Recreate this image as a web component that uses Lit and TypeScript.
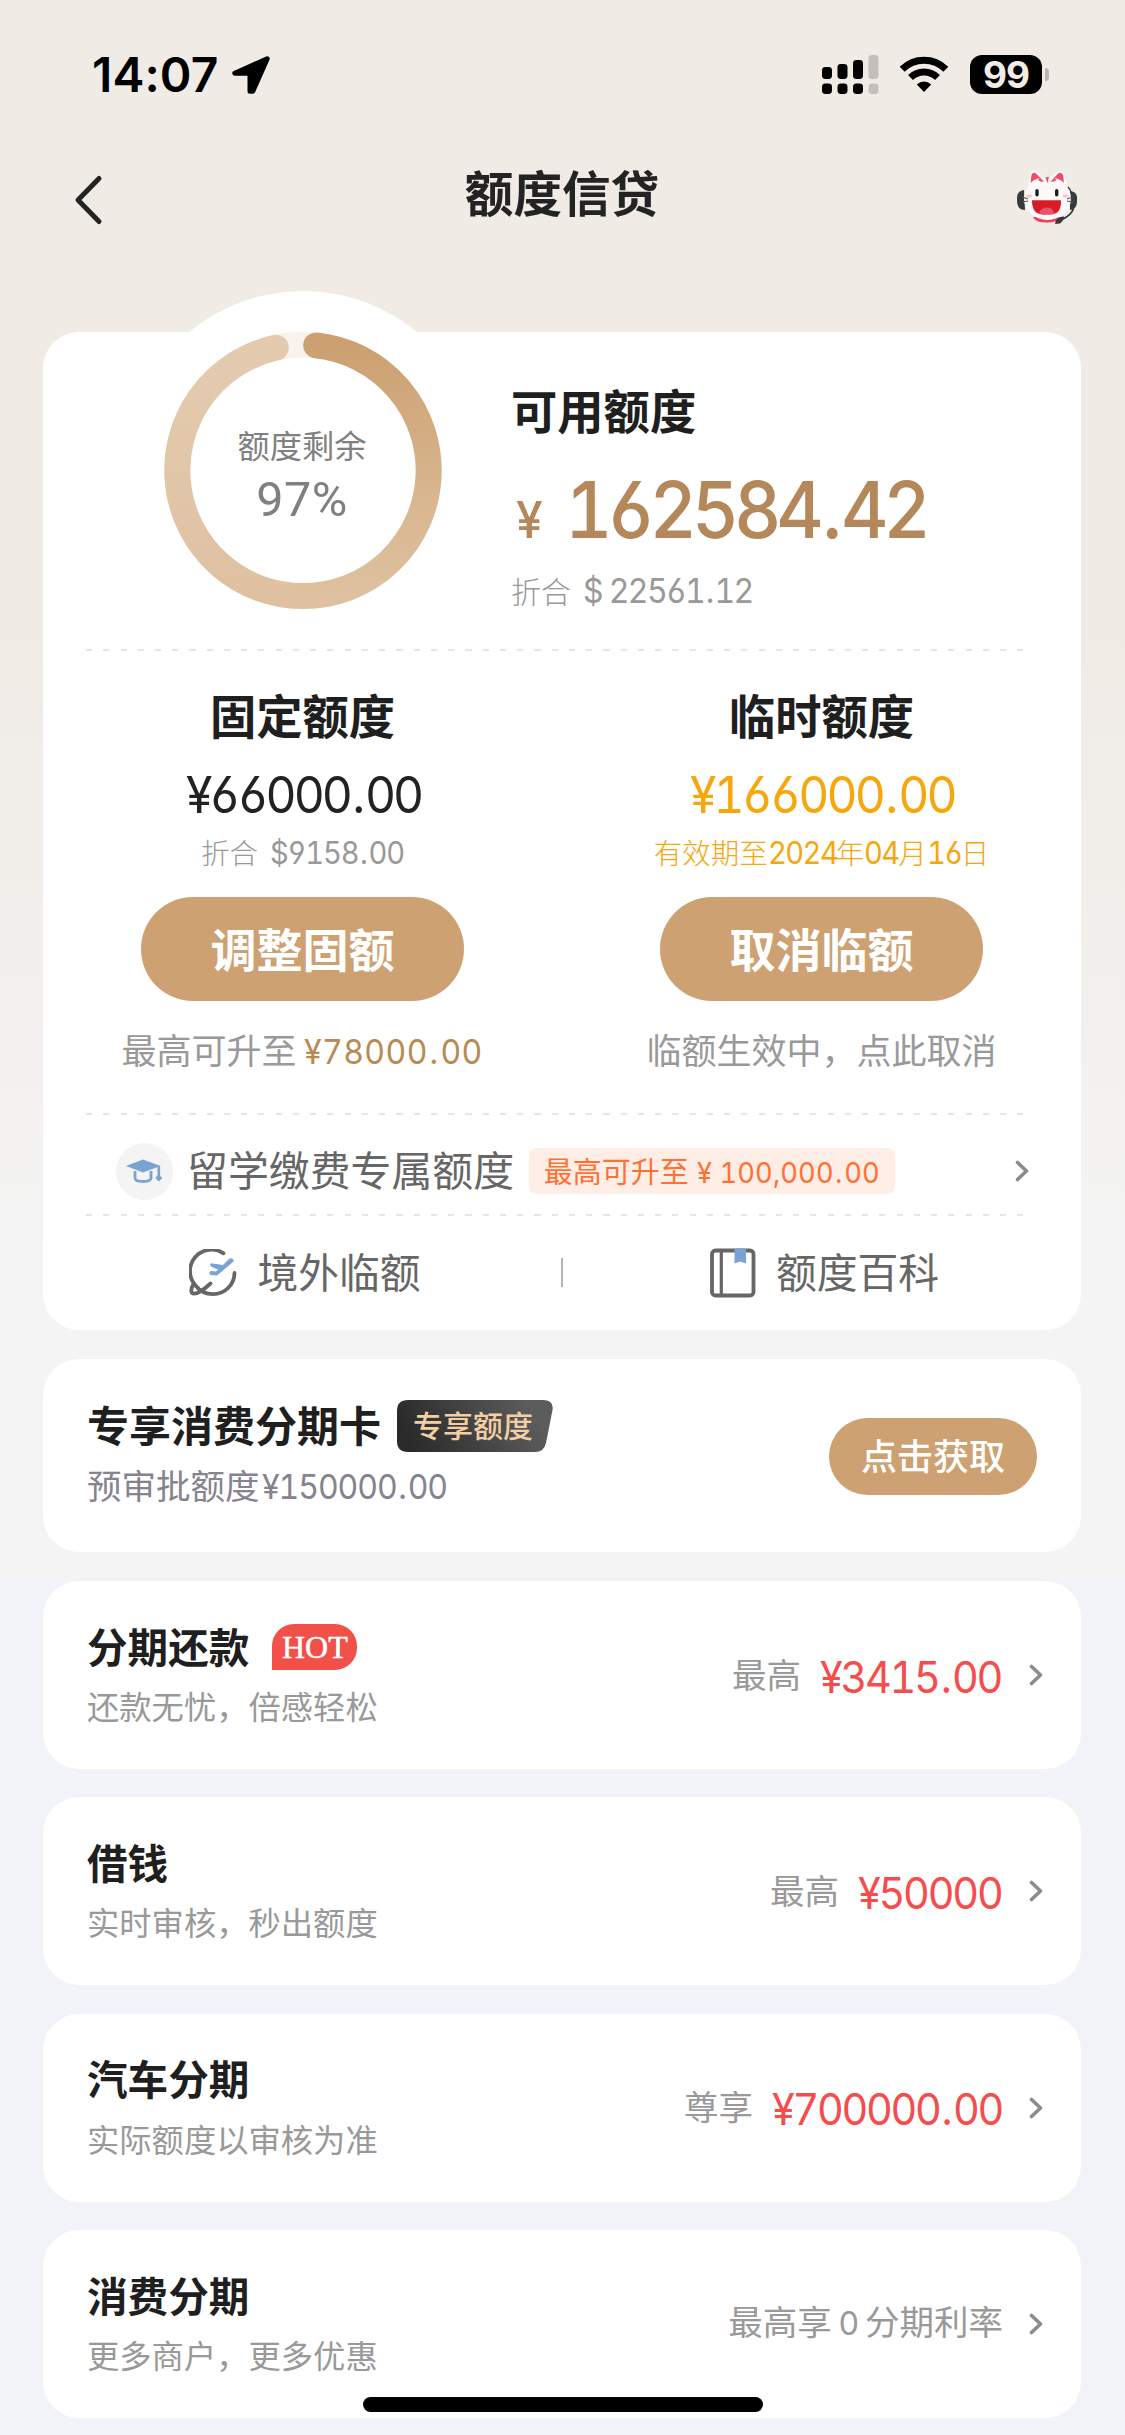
import { LitElement, html, css, svg, nothing } from "lit";
import { customElement, property } from "lit/decorators.js";

interface Product {
  title: string;
  sub: string;
  label: string;
  amount?: string;
  width?: number;
  hot?: boolean;
}

const PRODUCTS: Product[] = [
  { title: "分期还款", sub: "还款无忧，倍感轻松", label: "最高", amount: "¥3415.00", width: 183, hot: true },
  { title: "借钱", sub: "实时审核，秒出额度", label: "最高", amount: "¥50000", width: 145 },
  { title: "汽车分期", sub: "实际额度以审核为准", label: "尊享", amount: "¥700000.00", width: 231 },
  { title: "消费分期", sub: "更多商户，更多优惠", label: "最高享0分期利率" },
];

const chevron = html`<svg width="15" height="22" viewBox="0 0 15 22" fill="none">
  <path d="M2.5 2.5 L11.5 11 L2.5 19.5" stroke="#8c8c8c" stroke-width="3.6" stroke-linecap="round" stroke-linejoin="round" />
</svg>`;

/** A figure whose tracking is fitted to the given width. */
@customElement("money-figure")
export class MoneyFigure extends LitElement {
  @property() value = "";
  @property({ type: Number }) width = 100;
  @property({ type: Number }) size = 40;
  @property({ type: Number }) digit = 0.638;
  static styles = css`
    :host {
      display: inline-block;
      flex: none;
    }
    .run {
      display: inline-block;
      white-space: pre;
      font-family: Inter, sans-serif;
      font-feature-settings: "tnum", "cv03", "cv04";
      transform: scaleX(0.94);
      transform-origin: 0 50%;
    }
    .dot {
      margin: 0 0.06em 0 0.05em;
    }
  `;
  render() {
    const chars = [...this.value];
    const natural = chars.reduce((sum, c) => sum + (c === "." ? 0.4 : /[ ,]/.test(c) ? 0.28 : this.digit), 0) * this.size;
    const spacing = (this.width / 0.94 - natural) / chars.length;
    return html`<style>
        :host {
          width: ${this.width}px;
          height: 1em;
        }
        .run {
          font-size: ${this.size}px;
          letter-spacing: ${spacing.toFixed(2)}px;
        }</style
      ><span class="run">${this.value.split(/(\.)/).map((s) => (s === "." ? html`<span class="dot">.</span>` : s))}</span>`;
  }
}

@customElement("status-bar")
export class StatusBar extends LitElement {
  static styles = css`
    :host {
      display: flex;
      align-items: center;
      justify-content: space-between;
      height: 149px;
      padding: 0 76px 0 92px;
      box-sizing: border-box;
      flex: none;
    }
    .left {
      display: flex;
      align-items: center;
      gap: 13px;
    }
    .time {
      font: 600 48px/60px Inter, sans-serif;
      letter-spacing: 0.1px;
      color: #000;
    }
    .right {
      display: flex;
      align-items: center;
    }
    .signal {
      margin-right: 20px;
    }
    .wifi {
      margin-right: 21px;
    }
    .battery {
      display: flex;
      align-items: center;
      justify-content: center;
      width: 72px;
      height: 39px;
      border-radius: 12px;
      background: #000;
      color: #f1ece6;
      font: 700 37px/39px Inter, sans-serif;
      letter-spacing: -1px;
    }
    .nub {
      width: 4px;
      height: 13px;
      margin-left: 3px;
      border-radius: 0 5px 5px 0;
      background: #b9b5b0;
    }
  `;
  render() {
    return html`
      <div class="left">
        <span class="time">14:07</span>
        <svg width="40" height="40" viewBox="0 0 40 40">
          <path d="M36.2 3.800 L3.800 18.200 H19 V36.300 H21.800 Z" fill="#000" stroke="#000" stroke-width="5" stroke-linejoin="round" />
        </svg>
      </div>
      <div class="right">
        <svg class="signal" width="57" height="39" viewBox="0 0 57 39">
          ${[
            [0, 12, "#000"],
            [15.5, 9, "#000"],
            [31, 5, "#000"],
            [46.5, 0, "#c3c0bb"],
          ].map(
            ([x, y, c]) => svg`
              <rect x=${x} y=${y} width="10" height=${24 - Number(y)} rx="3.4" fill=${c} />
              <rect x=${x} y="28.5" width="10" height="10.5" rx="3.4" fill=${c} />`
          )}
        </svg>
        <svg class="wifi" width="50" height="37" viewBox="0 0 50 37">
          <g fill="none" stroke="#000" stroke-width="7">
            <path d="M3.2 13.2 A31 31 0 0 1 46.8 13.2" />
            <path d="M11.5 21.6 A19.2 19.2 0 0 1 38.5 21.6" />
          </g>
          <path d="M25 36 L17.8 28.6 A10.2 10.2 0 0 1 32.2 28.6 Z" fill="#000" />
        </svg>
        <span class="battery">99</span>
        <i class="nub"></i>
      </div>
    `;
  }
}

@customElement("nav-header")
export class NavHeader extends LitElement {
  static styles = css`
    :host {
      display: grid;
      grid-template-columns: 1fr auto 1fr;
      align-items: center;
      height: 101px;
      padding: 0 47px 0 72px;
      box-sizing: border-box;
      flex: none;
    }
    .title {
      font: 700 48.600px/60px "Noto Sans CJK SC", sans-serif;
      color: #232323;
      padding-bottom: 18px;
      margin-left: -26px;
    }
    .cat {
      justify-self: end;
      margin-bottom: 5px;
    }
  `;
  render() {
    return html`
      <svg width="32" height="52" viewBox="0 0 32 52" fill="none">
        <path d="M27 4.5 L6 26 L27 47.5" stroke="#232323" stroke-width="5" stroke-linecap="round" stroke-linejoin="round" />
      </svg>
      <span class="title">额度信贷</span>
      <svg class="cat" width="61" height="57" viewBox="0 0 61 57">
        <path d="M7 21 C1 22 0 25 0 31 C0 38 3 41 8 41 Z" fill="#3a3a3c" />
        <path d="M53 22 C60 23 60.500 27 60 32 C60 38 57 41 53 41 Z" fill="#3a3a3c" />
        <path d="M16 48 H43 Q41 53.500 30 53.500 Q18 53.500 16 48 Z" fill="#ee4058" />
        <path d="M11 15 L13 4 Q15 0 19 2 L26 8 H34 L41 2 Q45 0 47 4 L50 15 Z" fill="#fffafa" />
        <path d="M13.500 14 L14.500 6 Q16 2.500 19 4.500 L23.500 9 Q17 10 13.500 14 Z" fill="#f04b66" />
        <path d="M47 14 L46 6 Q44 2.500 41 4.500 L37 9 Q43.500 10 47 14 Z" fill="#f04b66" />
        <ellipse cx="30.500" cy="29.500" rx="23.500" ry="21.500" fill="#fffafa" />
        <path d="M28.500 8 H32 L30.300 14.500 Z M23 8.500 L27 12.500 L24 12.800 L21 11 Z M37.500 8.500 L33.500 12.500 L36.500 12.800 L39.500 11 Z" fill="#f0506c" />
        <rect x="18.300" y="20" width="3.400" height="7.500" rx="1.700" fill="#1d1d20" />
        <rect x="38" y="20" width="3.400" height="7.500" rx="1.700" fill="#1d1d20" />
        <ellipse cx="12" cy="27" rx="3.200" ry="1.600" fill="#ffc3cb" />
        <ellipse cx="48.500" cy="27" rx="3.200" ry="1.600" fill="#ffc3cb" />
        <path d="M15 31.300 H44 Q44.500 45.500 33.500 45.500 H26 Q15 45.500 15 31.300 Z" fill="#d91a27" />
        <path d="M22 43.800 Q24.500 38.500 30 38.500 Q35 38.500 37.500 43.800 Q36 45.500 33.500 45.500 H26 Q24 45.500 22 43.800 Z" fill="#e5566b" />
        <path d="M5 28 L11 30 M5 33 L11 32 M56 28 L50 30 M56 33 L50 32" stroke="#55555a" stroke-width="1.100" />
        <path d="M56.500 40 Q54 46 46 50" stroke="#3a3a3c" stroke-width="1.800" fill="none" />
        <path d="M51 18 Q53 20 54 23" stroke="#3a3a3c" stroke-width="1.400" fill="none" />
        <path d="M39 51 Q42 47.500 47 47.500 Q48 50 43 54.500 L38 55 Z" fill="#3a3a3c" />
      </svg>
    `;
  }
}

@customElement("quota-ring")
export class QuotaRing extends LitElement {
  @property({ type: Number }) percent = 97;
  static styles = css`
    :host {
      display: grid;
      place-items: center;
      width: 358px;
      height: 358px;
      flex: none;
    }
    .ring,
    .text {
      grid-area: 1 / 1;
    }
    .text {
      display: flex;
      flex-direction: column;
      align-items: center;
      color: #808080;
      padding: 10px 2px 0 0;
    }
    .label {
      font: 400 32.300px/44px "Noto Sans CJK SC", sans-serif;
    }
    .value {
      font: 400 48.500px/58px Roboto, sans-serif;
      letter-spacing: 0.400px;
      margin-top: 5px;
    }
  `;
  render() {
    const point = (deg: number) => {
      const a = (deg * Math.PI) / 180;
      return `${(179 + 125.7 * Math.sin(a)).toFixed(2)} ${(179.4 - 125.7 * Math.cos(a)).toFixed(2)}`;
    };
    return html`
      <svg class="ring" width="358" height="358" viewBox="0 0 358 358" fill="none">
        <defs>
          <linearGradient id="near" gradientUnits="userSpaceOnUse" x1="190" y1="50" x2="190" y2="310">
            <stop offset="0" stop-color="#cca070" />
            <stop offset="0.6" stop-color="#d8b68f" />
            <stop offset="1" stop-color="#dfc1a1" />
          </linearGradient>
          <linearGradient id="far" gradientUnits="userSpaceOnUse" x1="170" y1="50" x2="170" y2="310">
            <stop offset="0" stop-color="#e4cbb0" />
            <stop offset="1" stop-color="#dfc1a1" />
          </linearGradient>
        </defs>
        <circle cx="179" cy="179" r="179" fill="#fff" />
        <circle cx="179" cy="179.4" r="125.7" stroke="#f9f3ee" stroke-width="26" />
        <path d="M${point(180)} A125.700 125.700 0 0 1 ${point(347.5)}" stroke="url(#far)" stroke-width="26" stroke-linecap="round" />
        <path d="M${point(6)} A125.700 125.700 0 0 1 ${point(180)}" stroke="url(#near)" stroke-width="26" stroke-linecap="round" />
      </svg>
      <div class="text">
        <span class="label">额度剩余</span>
        <span class="value">${this.percent}%</span>
      </div>
    `;
  }
}

@customElement("product-card")
export class ProductCard extends LitElement {
  @property({ attribute: false }) item!: Product;
  static styles = css`
    :host {
      display: flex;
      justify-content: space-between;
      height: 188px;
      margin-bottom: 28.400px;
      padding: 0 37px 0 44px;
      box-sizing: border-box;
      border-radius: 36px;
      background: #fff;
      font-family: "Noto Sans CJK SC", sans-serif;
      flex: none;
    }
    .info {
      padding-top: 39px;
    }
    .head {
      display: flex;
      align-items: center;
      height: 52px;
      gap: 23px;
    }
    .title {
      font-size: 40.600px;
      line-height: 52px;
      font-weight: 700;
      color: #1f1f1f;
      margin-top: -1px;
    }
    .hot {
      width: 85px;
      height: 46px;
      margin-top: 2px;
      border-radius: 22px 22px 22px 0;
      background: #f2514a;
      color: #fff;
      font: 400 32px/46px "Liberation Serif", serif;
      -webkit-text-stroke: 0.500px #fff;
      text-align: center;
    }
    .sub {
      font-size: 32.300px;
      line-height: 44px;
      color: #999;
      margin-top: 11px;
    }
    .value {
      display: flex;
      align-items: center;
      height: 188px;
    }
    .label {
      font-size: 34.500px;
      line-height: 48px;
      color: #999;
      margin-bottom: 5px;
    }
    .digit {
      font-family: Inter, sans-serif;
      font-size: 32px;
      margin: 0 6px 0 7px;
    }
    .amount {
      font-size: 56px;
      line-height: 56px;
      color: #f54d4d;
      margin: 0 0 13px 19px;
    }
    .arrow {
      display: flex;
      margin-left: 26px;
    }
  `;
  render() {
    const { title, sub, label, amount, width, hot } = this.item;
    return html`
      <div class="info">
        <div class="head">
          <span class="title">${title}</span>
          ${hot ? html`<span class="hot">HOT</span>` : nothing}
        </div>
        <div class="sub">${sub}</div>
      </div>
      <div class="value">
        <span class="label">${label.split(/(\d)/).map((s) => (/\d/.test(s) ? html`<span class="digit">${s}</span>` : s))}</span>
        ${amount ? html`<money-figure class="amount" .value=${amount} .width=${width ?? 100} .size=${44}></money-figure>` : nothing}
        <span class="arrow">${chevron}</span>
      </div>
    `;
  }
}

@customElement("app-root")
export class AppRoot extends LitElement {
  static styles = css`
    :host {
      display: block;
    }
    .screen {
      position: relative;
      display: flex;
      flex-direction: column;
      width: 1125px;
      height: 2435px;
      overflow: hidden;
      box-sizing: border-box;
      background: linear-gradient(#f0ebe5 0, #f0ebe5 640px, #f4f4f4 1260px, #f4f4f4 1579px, #f2f3f8 1580px);
      font-family: "Noto Sans CJK SC", sans-serif;
    }
    .content {
      display: flex;
      flex-direction: column;
      padding: 82px 44px 0 43px;
    }
    .card {
      background: #fff;
      border-radius: 36px;
      flex: none;
      box-sizing: border-box;
    }
    .quota {
      height: 998px;
      margin-bottom: 29px;
    }
    .hero {
      display: flex;
      height: 317px;
      padding-left: 81px;
    }
    .ring {
      margin-top: -41px;
    }
    .summary {
      padding: 47px 0 0 29px;
    }
    .heading {
      font-size: 46.300px;
      line-height: 60px;
      font-weight: 700;
      color: #1f1f1f;
    }
    .total {
      display: flex;
      align-items: baseline;
      height: 90px;
      line-height: 90px;
      margin-top: 26px;
      padding-left: 5px;
      color: #b4885a;
      font-weight: 500;
    }
    .total .figure {
      margin-left: 20px;
    }
    .approx {
      display: flex;
      align-items: baseline;
      height: 40px;
      color: #999;
      font-size: 30px;
      font-weight: 300;
      line-height: 40px;
      margin-top: 15px;
    }
    .approx .figure {
      margin-left: 12px;
      font-weight: 400;
    }
    .dash {
      height: 2px;
      margin: 0 53px 0 43px;
      background: repeating-linear-gradient(90deg, #e6e6e6 0 6px, transparent 6px 17.250px);
    }
    .columns {
      display: grid;
      grid-template-columns: 1fr 1fr;
      height: 462px;
    }
    .column {
      display: flex;
      flex-direction: column;
      align-items: center;
      padding-top: 33px;
      white-space: nowrap;
    }
    .limit {
      display: flex;
      align-items: baseline;
      height: 60px;
      line-height: 60px;
      color: #222;
      margin: 21px 0 0 3px;
    }
    .detail {
      display: flex;
      align-items: baseline;
      height: 36px;
      line-height: 36px;
      font-size: 28.500px;
      font-weight: 300;
      color: #999;
      margin-top: 9px;
    }
    .detail money-figure {
      font-weight: 400;
    }
    .detail .gap {
      margin-left: 12px;
    }
    .limit.orange,
    .detail.orange {
      color: #f6a70d;
    }
    .pill {
      display: flex;
      align-items: center;
      justify-content: center;
      width: 323px;
      height: 104px;
      border-radius: 52px;
      background: #cda172;
      color: #fff;
      font-size: 46px;
      line-height: 60px;
      font-weight: 700;
      margin-top: 27px;
      padding-bottom: 4px;
      box-sizing: border-box;
    }
    .note {
      display: flex;
      align-items: baseline;
      height: 46px;
      font-size: 35px;
      line-height: 46px;
      color: #999;
      margin-top: 25px;
    }
    .note .raise {
      color: #b88b54;
      margin-left: 7px;
    }
    .study {
      display: flex;
      align-items: center;
      height: 99px;
      padding: 13px 51px 0 73px;
      box-sizing: border-box;
      font-size: 40.900px;
      line-height: 52px;
      color: #666;
    }
    .badge {
      display: flex;
      align-items: center;
      justify-content: center;
      width: 57px;
      height: 57px;
      border-radius: 50%;
      background: #f4f4f4;
      margin-right: 14px;
    }
    .study .name,
    .links .name {
      padding-bottom: 4px;
    }
    .tag {
      display: flex;
      align-items: baseline;
      justify-content: center;
      width: 366px;
      height: 46px;
      margin-left: 15px;
      border-radius: 8px;
      background: #ffeee6;
      color: #ff7033;
      font-size: 29px;
      line-height: 44px;
    }
    .tag .price {
      margin-left: 8px;
    }
    .study .arrow {
      display: flex;
      margin-left: auto;
    }
    .links {
      display: grid;
      grid-template-columns: 1fr 2px 1fr;
      align-items: center;
      height: 113px;
      padding-left: 4px;
      font-size: 40.800px;
      line-height: 52px;
      color: #666;
    }
    .link {
      display: flex;
      align-items: center;
      justify-content: center;
      gap: 20px;
    }
    .link:last-child {
      padding-left: 3px;
    }
    .rule {
      width: 2px;
      height: 29px;
      background: #b5b5b5;
      margin-left: -2px;
    }
    .offer {
      display: flex;
      justify-content: space-between;
      align-items: center;
      height: 193px;
      padding: 2px 44px 0;
      margin-bottom: 29px;
    }
    .offer .copy {
      align-self: flex-start;
      padding-top: 37px;
    }
    .offer .head {
      display: flex;
      align-items: center;
      height: 56px;
      gap: 16px;
      font-size: 42px;
      line-height: 56px;
      font-weight: 700;
      color: #1f1f1f;
    }
    .offer .name {
      padding-bottom: 4px;
    }
    .ribbon {
      display: grid;
      place-items: center start;
      width: 156px;
      height: 52px;
    }
    .ribbon > * {
      grid-area: 1 / 1;
    }
    .ribbon .words {
      font-size: 30px;
      line-height: 44px;
      font-weight: 500;
      color: #f3cfa3;
      padding: 0 0 4px 16px;
    }
    .pre {
      display: flex;
      align-items: baseline;
      height: 46px;
      margin-top: 7px;
      font-size: 34.500px;
      line-height: 46px;
      color: #85838f;
    }
    .pre .sum {
      margin-left: 2px;
    }
    .get {
      display: flex;
      align-items: center;
      justify-content: center;
      width: 208px;
      height: 77px;
      border-radius: 39px;
      background: #cda172;
      color: #fff;
      font-size: 36px;
      line-height: 44px;
      padding-bottom: 5px;
      box-sizing: border-box;
      font-weight: 500;
    }
    .home {
      position: absolute;
      left: 363px;
      top: 2397px;
      width: 400px;
      height: 15px;
      border-radius: 8px;
      background: #000;
    }
  `;

  private figure(value: string, width: number, size: number, cls = "", digit = 0.638) {
    return html`<money-figure class=${cls} .value=${value} .width=${width} .size=${size} .digit=${digit}></money-figure>`;
  }

  render() {
    return html`
      <div class="screen" lang="zh-CN">
        <status-bar></status-bar>
        <nav-header></nav-header>
        <div class="content">
          <section class="card quota">
            <div class="hero">
              <quota-ring class="ring" .percent=${97}></quota-ring>
              <div class="summary">
                <div class="heading">可用额度</div>
                <div class="total">
                  ${this.figure("¥", 29, 51)}${this.figure("162584.42", 364, 78, "figure", 0.651)}
                </div>
                <div class="approx">折合${this.figure("$ 22561.12", 169, 34, "figure", 0.641)}</div>
              </div>
            </div>
            <div class="dash"></div>
            <div class="columns">
              <div class="column">
                <div class="heading">固定额度</div>
                <div class="limit">${this.figure("¥66000.00", 237, 51)}</div>
                <div class="detail">折合${this.figure("$9158.00", 134, 31, "gap", 0.645)}</div>
                <div class="pill">调整固额</div>
                <div class="note">最高可升至${this.figure("¥78000.00", 180, 34, "raise")}</div>
              </div>
              <div class="column">
                <div class="heading">临时额度</div>
                <div class="limit orange">${this.figure("¥166000.00", 266, 51)}</div>
                <div class="detail orange">
                  有效期至${this.figure("2024", 68, 31)}年${this.figure("04", 34, 31)}月${this.figure("16", 34, 31)}日
                </div>
                <div class="pill">取消临额</div>
                <div class="note">临额生效中，点此取消</div>
              </div>
            </div>
            <div class="dash"></div>
            <div class="study">
              <span class="badge">
                <svg width="37" height="25" viewBox="0 0 37 25">
                  <path d="M17 0.500 L34.500 7 L17 13.500 L0 7 Z" fill="#78a3d2" />
                  <path d="M9 12 V19 Q9 22.500 17 22.500 Q25 22.500 25 19 V12" fill="none" stroke="#78a3d2" stroke-width="2.800" />
                  <path d="M32.800 7 V17" stroke="#78a3d2" stroke-width="2.600" />
                  <path d="M32.800 15 L36.300 19 L32.800 22.500 L29.300 19 Z" fill="#78a3d2" />
                </svg>
              </span>
              <span class="name">留学缴费专属额度</span>
              <span class="tag">最高可升至${this.figure("¥ 100,000.00", 184, 29, "price")}</span>
              <span class="arrow">${chevron}</span>
            </div>
            <div class="dash"></div>
            <div class="links">
              <div class="link">
                <svg width="48" height="48" viewBox="0 0 48 48" fill="none">
                  <g stroke="#666" stroke-width="3.800" stroke-linecap="round">
                    <path d="M34.500 4.300 A21.500 21.500 0 0 0 6.500 36.500 Q13 45 24 45.200 A21.500 21.500 0 0 0 45.500 24" />
                    <path d="M4.500 35 Q1 41 3 44 Q8 47 21.500 34.500" />
                  </g>
                  <path d="M21.500 25.500 L28 26 L44.500 12 Q44 9 40.500 10 L34 16.500 L22 14.800 Q21 17 23 17.500 L30 20.500 L27 23 L21.500 22.500 Q20 24 21.500 25.500 Z" fill="#78a3d2" stroke="#78a3d2" stroke-width="1" stroke-linejoin="round" />
                </svg>
                <span class="name">境外临额</span>
              </div>
              <i class="rule"></i>
              <div class="link">
                <svg width="46" height="50" viewBox="0 0 46 50" fill="none">
                  <rect x="2" y="2.500" width="41.500" height="45" rx="3.500" stroke="#666" stroke-width="3.800" />
                  <path d="M11.300 3 V47" stroke="#666" stroke-width="3.200" />
                  <path d="M24.500 0.500 H36 V15.500 L30.200 13.500 L24.500 15.500 Z" fill="#78a3d2" />
                </svg>
                <span class="name">额度百科</span>
              </div>
            </div>
          </section>

          <section class="card offer">
            <div class="copy">
              <div class="head">
                <span class="name">专享消费分期卡</span>
                <span class="ribbon">
                  <svg width="156" height="52" viewBox="0 0 156 52">
                    <defs>
                      <linearGradient id="dark" gradientUnits="userSpaceOnUse" x1="20" y1="56" x2="130" y2="0">
                        <stop offset="0" stop-color="#2a2a2a" />
                        <stop offset="1" stop-color="#5c5c5c" />
                      </linearGradient>
                    </defs>
                    <path d="M11 0 H146 Q157 0 155.500 10 L149 43 Q147 52 138 52 H11 Q0 52 0 41 V11 Q0 0 11 0 Z" fill="url(#dark)" />
                  </svg>
                  <span class="words">专享额度</span>
                </span>
              </div>
              <div class="pre">预审批额度${this.figure("¥150000.00", 187, 34, "sum", 0.642)}</div>
            </div>
            <span class="get">点击获取</span>
          </section>

          ${PRODUCTS.map((p) => html`<product-card .item=${p}></product-card>`)}
        </div>
        <div class="home"></div>
      </div>
    `;
  }
}
